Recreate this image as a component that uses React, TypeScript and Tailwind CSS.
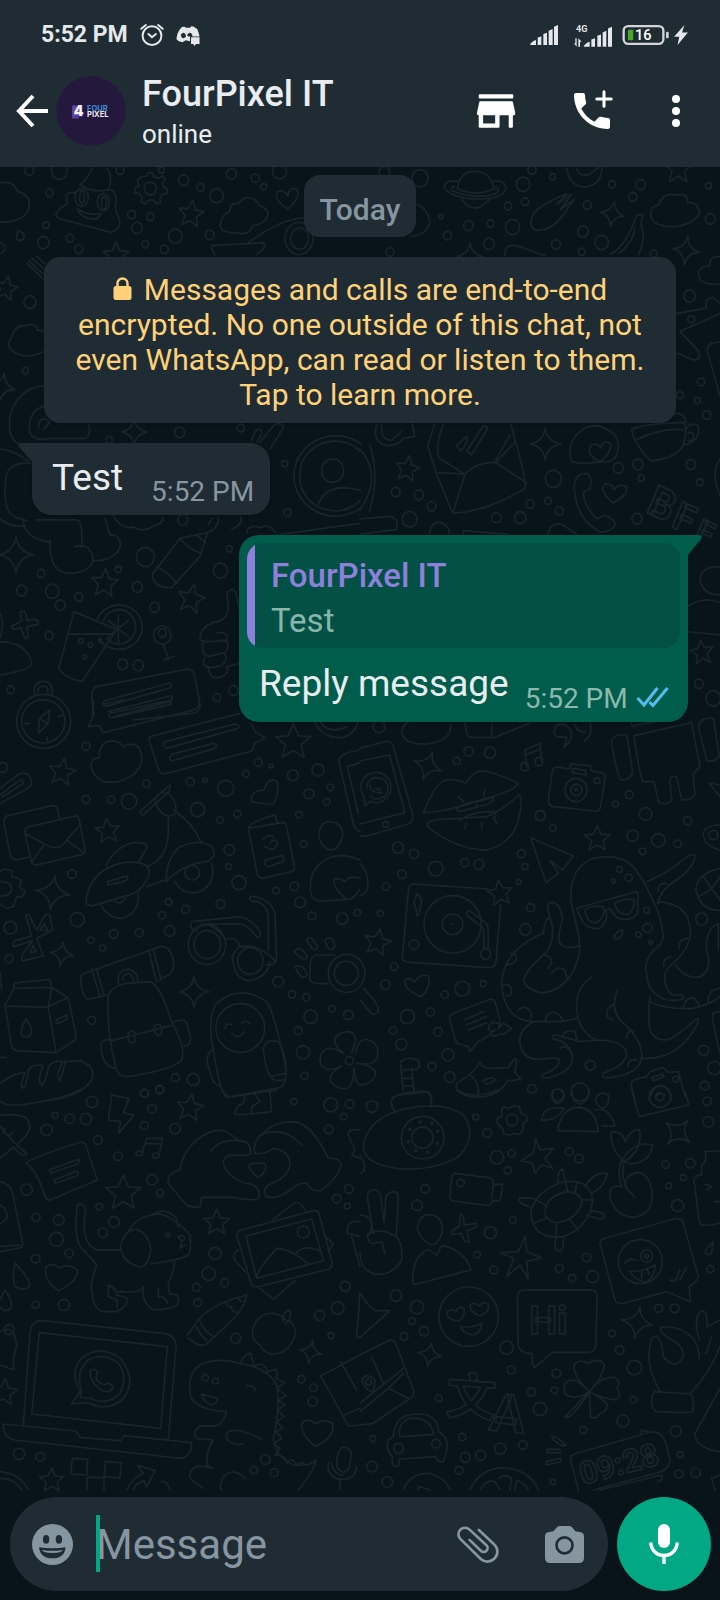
import React from "react";

type Triple = [number, number, number];
type Mark = [number, number, number, number];

interface Tile {
  x: number;
  y: number;
  scaleY: number;
  dots: Triple[];
  stars: Mark[];
  sparkles: Mark[];
  lines: string[];
  words?: { text: string; x: number; y: number; size: number; turn: number }[];
}

const STAR =
  "M0-1 L.28-.36 L.95-.31 L.43.14 L.59.81 L0 .45 L-.59.81 L-.43.14 L-.95-.31 L-.28-.36Z";
const SPARKLE = "M0-1 Q.1-.18 1 0 Q.12.12 0 1 Q-.12.12-1 0 Q-.1-.18 0-1Z";

const TILES: Tile[] = [
  {
    x: 0,
    y: 160,
    scaleY: 0.357,
    dots: [
      [88, 30, 13], [178, 30, 24], [148, 92, 11], [138, 183, 9], [130, 231, 17], [210, 219, 11],
      [360, 28, 12], [484, 28, 9], [551, 57, 15], [602, 77, 11], [694, 39, 15], [766, 51, 12],
      [791, 75, 9], [839, 32, 21], [650, 100, 20], [395, 153, 12], [451, 159, 11], [411, 190, 16],
      [526, 213, 20], [629, 210, 13], [436, 236, 10], [493, 250, 12], [236, 250, 12], [0, 247, 14],
      [90, 398, 18], [76, 590, 9], [539, 763, 15], [722, 751, 11], [327, 784, 10], [854, 851, 9],
      [863, 988, 11], [549, 1008, 15], [436, 1112, 27], [661, 1150, 21], [355, 1147, 9],
      [688, 1089, 9], [123, 1158, 11], [65, 1206, 15], [157, 1208, 20], [181, 1247, 15],
      [236, 1224, 12], [412, 1196, 15], [464, 1253, 14], [147, 1332, 12], [368, 1413, 15],
      [415, 1416, 15], [32, 1484, 11], [651, 1506, 11], [700, 1486, 14], [487, 1331, 26],
      [487, 1325, 12], [300, 1346, 5], [271, 1358, 7], [243, 1347, 7], [254, 1392, 6],
    ],
    stars: [
      [573, 152, 40, 8], [348, 268, 40, 0], [18, 360, 36, 12], [314, 1186, 42, 5], [573, 1230, 42, 12],
    ],
    sparkles: [[403, 762, 38, 0], [48, 1106, 52, 0], [6, 636, 40, 10]],
    lines: [
      "M0 65 Q40 55 52 88 Q95 98 87 135 Q75 173 0 175",
      "M240 70 Q260 55 278 22 M322 24 Q338 48 328 76 M225 92 Q188 85 204 122 Q150 150 178 164 L330 202 Q370 195 356 160 Q340 140 350 110 Q345 82 325 82 Q280 95 243 70 M232 137 Q270 158 303 150 Q298 170 270 164 Q240 160 232 137",
      "M225 105 A20 25 0 1 1 265 105 A20 25 0 1 1 225 105 M292 118 A18 24 0 1 1 328 118 A18 24 0 1 1 292 118 M240 102 a7 12 0 1 1 12 4 a7 12 0 1 1 -12-4 M306 118 a7 12 0 1 1 12 4 a7 12 0 1 1-12-4",
      "M437 46 L445 36 H458 L462 48 L476 51 L488 44 L496 54 L487 66 L492 77 L502 82 L500 94 L487 97 L480 108 L482 118 L468 122 L460 112 L445 113 L436 123 L424 116 L426 103 L416 94 L404 91 L405 78 L417 72 L413 56 L423 47Z M433 80 a18 18 0 1 1 36 0 a18 18 0 1 1-36 0",
      "M689 145 Q690 120 716 121 Q735 95 765 112 Q778 120 778 128 Q808 135 803 158 Q790 182 757 184 Q750 213 710 204 Q660 205 661 181 Q665 150 689 145Z",
      "M864 137 Q815 108 834 88 Q856 84 864 101 Q867 74 888 81 Q908 99 864 137Z",
      "M855 220 a42 45 0 1 1 84 0 a42 45 0 1 1-84 0 M872 220 a27 30 0 1 1 54 0 a27 30 0 1 1-54 0 M740 235 Q840 165 910 162 M635 240 L790 232 Q805 240 770 265 M645 266 L633 245",
      "M50 222 Q50 205 55 198 Q78 205 70 222 Q60 228 50 222Z M82 290 L132 335 M95 275 L132 305 M86 282 L130 320 M110 270 L134 290",
      "M130 537 Q80 560 40 537 Q15 520 35 497 Q45 460 78 464 Q110 455 112 475 L132 482",
      "M132 632 Q50 640 30 720 Q20 790 70 800 M132 690 Q85 700 88 760 Q100 790 150 780 H255 Q275 770 266 740 M115 750 Q120 710 150 735 L130 755",
      "M0 810 Q40 810 92 850 Q35 845 20 880 Q10 930 20 970 Q25 1000 80 1010 M0 1005 Q30 1030 70 1025 M70 1005 Q70 1060 150 1070 M110 1008 H230 Q250 1010 245 1085 M150 1065 Q145 1160 215 1158 Q285 1150 278 1110 Q265 1070 225 1083 M315 1005 L330 1050 Q365 1050 360 1085 Q340 1125 278 1122",
      "M340 995 Q360 1035 400 1028 Q430 1045 460 1025 Q490 1020 490 1000 M620 1045 Q660 1030 655 1000 M625 1020 L635 1005 M695 1035 Q730 1020 722 1000 M740 1045 Q745 1018 780 1030 Q805 1015 828 1045",
      "M457 1160 L540 1060 L622 1044 L600 1110 L515 1198 Q460 1200 457 1160Z M540 1060 Q560 1085 598 1100 M470 1140 Q500 1150 530 1185 M590 1052 L618 1072",
      "M222 1265 L350 1315 L247 1460 Q200 1455 176 1425Z M205 1328 H340 M290 1290 A70 62 0 1 1 300 1345 M310 1290 A50 48 0 1 1 320 1340 M355 1275 V1350 M325 1290 L385 1335 M325 1335 L385 1290",
      "M60 1268 Q80 1255 80 1290 Q115 1280 115 1300 L80 1308 Q90 1345 75 1340 L62 1310 Q35 1320 35 1305 L65 1292Z M490 1357 L506 1398 M492 1400 L525 1390",
      "M0 1350 Q80 1350 95 1410 Q95 1430 0 1442 M0 1270 Q15 1300 0 1338",
      "M755 785 Q765 750 780 755 Q795 760 770 790 M780 790 L825 740 Q850 735 850 750 L810 810",
      "M882 885 a125 112 0 0 1 200-90 M882 885 a125 112 0 0 0 200 90 M900 885 a105 92 0 0 1 180-70 M900 885 a105 92 0 0 0 180 70 M965 870 a33 33 0 1 1 66 0 a33 33 0 1 1-66 0 M955 965 Q980 900 1080 925",
      "M680 1215 Q700 1190 710 1220 L718 1260 M680 1215 Q700 1290 640 1295 Q600 1310 600 1340 Q600 1355 680 1345 Q690 1320 650 1325 M610 1350 Q600 1390 630 1390 L675 1380 Q695 1350 670 1345 M615 1392 Q600 1420 635 1422 Q690 1415 675 1385 M625 1422 Q630 1460 665 1448 Q690 1435 680 1420 L718 1410",
      "M275 1568 L282 1520 Q265 1490 290 1475 L550 1428 Q580 1420 585 1450 L600 1525 Q600 1545 580 1550 L400 1568 M315 1515 L510 1465 Q520 1478 505 1480 L320 1530 Q300 1525 315 1515 M325 1545 L515 1500 Q520 1515 505 1518 L340 1560",
      "M105 1500 Q95 1465 130 1460 Q165 1465 155 1500 M115 1490 a15 12 0 1 1 28 0 M830 1050 L1080 1018",
    ],
  },
  {
    x: 360,
    y: 160,
    scaleY: 0.357,
    dots: [
      [73, 34, 16], [180, 51, 24], [489, 68, 20], [516, 28, 12], [578, 47, 9], [757, 68, 10],
      [842, 69, 14], [819, 103, 12], [682, 126, 12], [444, 129, 11], [495, 117, 11], [325, 184, 14],
      [392, 178, 10], [458, 188, 21], [263, 212, 12], [387, 235, 16], [588, 237, 13], [669, 200, 16],
      [725, 231, 20], [665, 257, 10], [1051, 165, 15], [1046, 72, 9], [881, 262, 10], [989, 381, 17],
      [994, 446, 10], [1023, 622, 11], [960, 659, 10], [1012, 674, 9], [1040, 714, 12], [243, 159, 6],
      [107, 930, 13], [177, 938, 14], [215, 970, 13], [149, 1006, 22], [409, 1002, 14], [481, 1002, 17],
      [510, 964, 12], [564, 955, 10], [598, 983, 12], [580, 893, 24], [775, 862, 15], [834, 853, 15],
      [844, 891, 9], [993, 853, 14], [1019, 903, 10], [831, 1005, 15], [1017, 1467, 13], [1060, 1508, 22],
      [90, 258, 12],
    ],
    stars: [[142, 866, 38, 10], [955, 25, 44, 0], [1026, 1380, 36, -8]],
    sparkles: [[757, 152, 36, 10], [978, 254, 40, 8], [556, 796, 46, 0], [330, 270, 38, 0]],
    lines: [
      "M292 80 Q300 32 345 32 Q390 32 402 80 Q350 105 292 80Z M295 60 Q245 55 255 82 Q300 120 405 105 Q450 90 432 65 Q420 55 396 60 M283 75 Q270 75 275 85 Q340 112 405 95 Q425 85 408 75 M305 110 Q345 160 390 108",
      "M516 160 Q525 130 620 95 L590 125 L635 95 L600 140 L643 110 L605 160 Q570 200 530 197 Q505 190 516 160Z",
      "M620 25 Q630 75 675 76 Q725 70 726 22 M650 25 Q660 48 690 40 L715 20",
      "M875 165 Q865 130 897 125 Q910 90 945 98 Q985 90 982 118 Q1020 120 1018 150 Q1000 180 950 186 Q890 190 875 165Z",
      "M750 265 Q800 240 830 155 L848 153 L843 180 Q860 220 835 265 M780 260 Q820 230 825 190",
      "M150 215 Q215 205 208 165 Q200 135 172 125 M435 268 Q430 235 470 240 L555 268",
      "M1080 270 Q1045 270 1050 295 Q1005 300 1020 335 Q1030 350 1080 348 M948 430 L1040 415 Q1030 390 1060 385 L1080 400 M948 540 L1000 560 Q1025 560 1015 535 L960 480 L1080 430 M1080 510 Q1040 510 1042 535 L1080 660",
      "M50 740 Q35 790 80 800 Q115 800 130 780 L165 775 L155 735 M65 740 Q60 785 95 785 L125 760",
      "M225 737 L203 800 L228 875 L278 990 Q380 985 495 920 Q500 890 452 740 M250 740 Q225 800 237 835 L315 880 L278 990 M228 875 L315 880 Q350 845 407 847 L500 905 M407 847 L465 790 M407 840 L450 770 M290 800 L320 775 Q330 785 302 815Z M320 815 L370 745 Q390 745 375 765 L335 825Z",
      "M635 845 Q620 800 650 770 Q680 740 715 745 Q790 765 772 820 Q765 850 720 845 Q675 825 693 800 Q710 790 722 805 Q735 780 752 795 Q755 820 720 845 Q670 855 635 845Z",
      "M815 755 Q840 740 970 735 Q985 750 970 800 Q940 840 870 842 Q820 790 815 755Z M825 785 Q900 750 970 755 M975 760 Q990 730 1015 745 Q1020 790 975 798 M985 765 a10 12 0 1 1 0 20 M940 712 Q975 705 978 735",
      "M643 920 Q640 880 680 878 Q700 890 690 920 L670 932 Q675 975 710 1005 L735 995 Q770 1010 765 1025 Q745 1045 720 1042 Q650 1010 643 920Z",
      "M758 960 Q715 925 735 908 Q755 905 763 923 Q775 905 800 915 Q805 940 758 960Z",
      "M30 800 Q60 885 28 985 M0 810 Q70 885 0 980 M0 1005 L90 998 Q120 1005 108 1035 L0 1048 M208 1048 Q215 1005 250 1018 Q270 1030 268 1048 M565 1048 Q570 1015 605 1020 L650 1048 M310 1048 V1038 L440 1048",
      "M1080 1140 Q1025 1135 1020 1175 Q1030 1220 1080 1218 M985 1250 Q1030 1220 1080 1240 M985 1322 L1080 1330 M1080 840 Q1050 870 1080 940",
    ],
    words: [
      { text: "B", x: 855, y: 985, size: 120, turn: 24 },
      { text: "F", x: 930, y: 1025, size: 110, turn: 24 },
      { text: "F", x: 1000, y: 1062, size: 90, turn: 24 },
    ],
  },
  {
    x: 0,
    y: 700,
    scaleY: 0.3333,
    dots: [
      [258, 139, 12], [440, 251, 11], [571, 245, 12], [615, 241, 7], [677, 265, 24], [775, 187, 12],
      [738, 222, 10], [879, 226, 16], [954, 210, 18], [991, 262, 10], [927, 282, 15], [980, 305, 10],
      [8, 202, 15], [258, 298, 12], [333, 299, 11], [387, 304, 23], [593, 329, 21], [712, 342, 11],
      [660, 360, 10], [897, 344, 10], [688, 450, 16], [686, 500, 9], [717, 548, 21], [911, 432, 10],
      [828, 572, 10], [883, 559, 13], [900, 607, 16], [216, 522, 13], [232, 659, 21], [31, 683, 19],
      [273, 721, 10], [341, 702, 13], [418, 698, 12], [308, 744, 9], [509, 693, 16], [557, 628, 12],
      [486, 646, 11], [506, 606, 10], [661, 612, 13], [936, 648, 12], [1027, 656, 17], [1072, 638, 10],
      [27, 776, 12], [275, 961, 12], [835, 845, 16], [876, 883, 11], [919, 892, 11], [996, 926, 10],
      [932, 950, 20], [895, 992, 12], [1045, 945, 14], [909, 1057, 20], [914, 1127, 11], [526, 1133, 12],
      [580, 1138, 18], [479, 1168, 12], [433, 1180, 12], [814, 198, 6], [1048, 1082, 12],
    ],
    stars: [[186, 217, 42, 10], [323, 393, 38, -6], [880, 127, 55, 0]],
    sparkles: [[158, 578, 52, 8], [185, 762, 36, 8], [582, 876, 46, 0]],
    lines: [
      "M50 64 a81 81 0 1 1 162 0 a81 81 0 1 1-162 0 M65 64 a65 65 0 1 1 130 0 a65 65 0 1 1-130 0 M118 55 L150 30 L143 72 L115 100Z M118 55 L143 72 M75 70 H88 M175 50 L188 45 M140 110 L142 122",
      "M275 0 L282 45 L265 80 L297 77 L310 98 L580 30 Q602 20 598 0 M310 12 L370 0 M330 40 L505 2 Q520 8 510 14 L335 54 Q320 48 330 40",
      "M298 172 Q295 120 345 123 Q365 130 370 140 Q390 125 415 140 Q440 180 405 220 Q360 255 310 245 Q265 220 275 185 Q282 175 298 172Z",
      "M450 110 L720 40 M450 110 Q445 120 450 130 L475 205 Q480 225 500 220 L755 153 L765 130 L795 113 L765 95 L755 72 M495 125 L705 72 Q720 75 715 85 L500 145 Q485 135 495 125 M515 163 L640 130 Q655 135 645 145 L515 183 Q503 175 515 163",
      "M0 265 L60 220 Q95 215 95 255 L75 270 L0 310 M0 285 L60 240 Q75 240 68 252 L5 292",
      "M92 470 L50 480 Q35 480 30 462 L12 370 Q10 350 25 347 L155 317 Q170 315 173 330 L178 352 M75 400 Q72 385 88 380 L225 348 Q235 345 238 360 L255 450 Q255 463 240 465 L110 495 Q95 495 93 480Z M78 402 Q130 430 150 440 Q185 450 200 420 L240 375 M130 437 L97 483 M200 420 L250 458",
      "M0 517 L8 507 L35 512 L35 530 L55 535 L65 545 L58 560 L75 575 L68 590 L50 590 L45 605 L40 620 L20 625 L0 612 M0 545 Q35 545 35 567 Q30 590 0 588",
      "M77 645 Q88 640 92 655 L110 690 L135 645 Q150 640 150 650 L158 690 L110 715 L130 768 L70 782 Q60 780 70 760 L98 722 L42 740 Q35 730 45 722 L95 708Z M120 690 L133 672 L143 692Z M90 758 L100 738 L110 755Z",
      "M425 330 L510 255 Q515 270 490 290 L430 345 Q415 345 425 330Z M465 300 Q475 270 505 280 Q530 300 528 335 Q515 355 495 345 Q470 330 465 300Z M505 350 V400 Q500 480 440 500 M520 330 Q580 370 602 425 M500 545 Q495 480 540 440 Q600 415 635 440 Q655 470 620 485 Q540 495 500 545Z M525 545 Q550 590 600 575 Q650 550 635 490 M555 518 a22 22 0 1 1 44 0 a22 22 0 1 1-44 0 M318 498 Q345 440 400 428 Q445 425 440 445 L415 487 M258 600 Q270 510 370 488 Q450 480 448 520 Q430 580 370 590 L280 617 Q255 618 258 600Z M322 545 L380 528 Q388 535 378 542 L325 556Z M302 612 Q325 660 370 655 Q420 635 415 580 M340 600 Q360 620 375 595 M440 560 L495 540",
      "M755 305 Q752 280 775 272 Q795 275 797 257 Q810 230 832 245 Q838 280 820 312 Q780 312 755 305Z",
      "M745 385 L850 367 Q858 367 860 378 L883 500 Q885 512 872 515 L790 535 Q775 535 772 522Z M745 385 Q750 365 825 345 L832 368 M790 420 Q800 400 820 410 M795 440 Q830 460 832 425 Q820 415 810 430 M797 480 L845 467 Q858 475 848 485 L805 500 Q790 495 797 480Z",
      "M957 405 Q960 365 990 365 Q1030 370 1028 410 Q1015 450 990 450 Q960 440 957 405Z M935 590 Q920 530 960 490 Q1010 450 1080 480 M935 590 Q945 605 970 603 L1040 598 M1040 598 Q995 560 1003 540 Q1020 530 1035 545 Q1050 525 1080 535 M1040 598 Q1060 600 1078 570",
      "M565 734 a56 60 0 1 1 112 0 a56 60 0 1 1-112 0 M582 734 a40 42 0 1 1 80 0 a40 42 0 1 1-80 0 M697 765 Q700 840 750 842 Q805 830 810 785 M713 783 a38 40 0 1 1 76 0 a38 40 0 1 1-76 0 M675 720 Q710 705 720 740 Q695 760 697 780 M572 670 Q570 690 590 692 M575 665 L720 650 Q760 660 780 695 Q785 712 770 712 Q750 680 725 672 L620 672 M775 605 Q740 605 752 588 Q810 595 825 640 L830 780 Q820 800 800 795 M775 605 Q805 620 805 650 V750 M605 672 Q640 670 675 715 M720 740 Q780 730 828 785",
      "M242 840 Q240 825 255 820 L480 740 Q510 735 520 780 Q525 815 505 825 L470 845 M242 840 Q245 890 265 898 L325 885 M275 807 L300 890 M288 802 L312 885 M447 752 L468 840 M460 748 L482 835 M355 850 Q350 810 385 808 Q415 815 413 845 M368 840 Q370 820 390 822 Q400 830 400 845",
      "M325 890 Q330 860 380 850 L450 845 Q480 855 515 965 Q560 1050 545 1080 Q520 1110 380 1130 Q350 1130 345 1090 Q320 1000 325 890Z M335 1022 L520 975 M385 1000 Q395 985 405 1000 V1022 Q395 1035 385 1022Z M462 980 Q475 965 485 980 V1000 Q475 1012 465 1000Z M335 1020 Q300 1015 303 1040 Q305 1100 348 1105 M525 965 Q560 950 562 980 Q580 1020 565 1035 L550 1038",
      "M42 865 Q38 848 55 848 L150 838 L155 862Z M42 865 L15 915 L35 1040 Q40 1053 60 1053 L168 1058 L225 1020 Q230 1010 225 990 L205 895 L155 862 M15 918 L145 922 L168 1058 M145 920 L200 895 M155 862 L145 920 M78 957 Q60 990 65 1005 Q80 1020 95 1000 Q95 980 78 957Z M168 960 L200 945 Q203 955 198 960 L170 972Z",
      "M0 1150 Q60 1110 75 1120 Q60 1150 68 1165 Q80 1160 85 1110 Q100 1090 130 1098 Q110 1140 125 1158 Q140 1140 145 1100 Q160 1080 188 1085 Q165 1130 178 1143 Q190 1120 195 1085 L240 1082 Q290 1100 275 1140 Q240 1190 150 1200",
      "M640 1050 Q620 950 650 910 Q720 850 800 905 Q820 930 855 1090 Q865 1150 840 1163 L680 1192 Q660 1180 640 1050Z M648 984 a73 73 0 1 1 146 0 a73 73 0 1 1-146 0 M675 985 Q680 965 695 975 M725 970 Q740 955 750 972 M695 1000 Q715 1022 733 995 M790 1045 Q800 1015 835 1025 Q860 1060 858 1120 L810 1130 Q795 1100 790 1045Z M638 1050 Q615 1060 625 1100 L640 1145 L660 1160 M815 1130 Q815 1145 850 1140",
      "M883 755 Q900 730 922 770 Q915 790 883 755Z M920 720 Q930 700 953 740 Q945 765 920 720Z M975 720 Q995 700 1005 740 Q985 765 975 720Z M885 800 Q910 790 922 825 Q905 845 885 800Z M1005 765 H950 Q930 770 930 800 V840 Q935 855 985 850 M985 820 a55 57 0 1 1 110 0 a55 57 0 1 1-110 0 M1003 820 a36 36 0 1 1 72 0 a36 36 0 1 1-72 0",
      "M1030 1060 Q1000 1035 1005 1015 Q1020 995 1045 995 Q1070 1000 1066 1025 L1055 1060 M1030 1060 Q985 1030 965 1060 Q950 1095 980 1108 Q1005 1110 1025 1098 Q985 1120 992 1145 Q1010 1170 1040 1165 Q1060 1160 1062 1105",
      "M1080 150 Q1010 160 1018 190 L1060 370 Q1065 390 1080 395 M1080 188 L1042 200 L1075 340",
      "M940 60 Q970 120 1030 112 Q1065 100 1075 66 M960 66 Q990 105 1040 80 M0 820 L5 870 M0 1072 H20",
    ],
  },
  {
    x: 360,
    y: 700,
    scaleY: 0.3333,
    dots: [
      [57, 80, 18], [326, 154, 14], [390, 158, 17], [290, 183, 11], [766, 312, 9], [808, 284, 12],
      [541, 347, 15], [579, 383, 10], [857, 342, 19], [983, 362, 12], [818, 407, 17], [895, 421, 20],
      [953, 431, 11], [848, 454, 10], [114, 443, 17], [162, 462, 14], [227, 506, 22], [314, 488, 12],
      [357, 493, 15], [126, 523, 13], [484, 461, 12], [495, 500, 9], [476, 546, 7], [78, 560, 11],
      [61, 640, 9], [512, 623, 12], [496, 688, 17], [1025, 657, 18], [103, 800, 11], [76, 854, 14],
      [307, 866, 22], [370, 851, 9], [254, 884, 11], [142, 950, 21], [211, 936, 12], [99, 992, 11],
      [234, 995, 13], [124, 1033, 17], [264, 1065, 18], [216, 1100, 12], [269, 1131, 16], [691, 1096, 15],
      [516, 1166, 13], [660, 1176, 27], [593, 1185, 18], [1031, 1051, 15], [1063, 1104, 20],
      [1034, 1157, 13], [778, 508, 9], [806, 533, 11], [760, 542, 6], [860, 631, 9], [863, 684, 14],
      [835, 704, 8], [872, 727, 6], [162, 734, 14], [711, 242, 9], [77, 373, 9], [1060, 405, 14],
    ],
    stars: [[712, 417, 40, 0], [420, 580, 40, -8], [52, 728, 42, 12]],
    sparkles: [[203, 198, 44, 20]],
    lines: [
      "M125 95 Q130 70 145 68 M125 95 Q130 135 200 132 Q275 125 272 75 M315 70 L320 100 Q325 115 345 112 L400 113 L510 70 M395 75 V112 M612 142 Q640 120 632 90 Q615 65 590 75 Q575 95 590 110 L620 112 Q620 125 612 142 M672 124 Q700 105 690 70 M645 75 Q650 95 675 97",
      "M500 200 L495 150 L540 130 L545 185 M495 165 L542 147 M484 200 a11 9 0 1 1 20 0 a11 9 0 1 1-20 0 M527 185 a11 9 0 1 1 20 0 a11 9 0 1 1-20 0",
      "M0 145 L75 125 Q95 122 100 140 L158 345 Q160 365 145 372 L20 408 L0 408 M0 183 L88 165 L135 338 L0 372 M12 290 A45 45 0 1 1 30 304 L15 318Z M20 265 A32 32 0 1 1 30 288 M30 255 Q25 275 65 280 L60 268 L45 265",
      "M190 338 Q230 240 260 240 Q290 235 318 250 Q340 210 370 213 Q400 215 475 250 Q460 275 360 300 Q270 335 190 338Z M202 380 Q200 360 240 358 L380 350 Q430 330 475 285 Q490 290 480 340 Q465 430 380 450 Q290 450 202 380Z M290 330 Q290 315 345 305 L355 320 L300 335Z M355 305 L400 292 Q400 315 360 318 M300 362 Q330 335 400 335 Q415 345 400 355 M295 290 L310 305 M375 270 L370 290 M315 385 L318 370 M365 385 V368 M410 370 L402 355",
      "M578 210 Q580 200 595 202 L630 207 L632 192 L690 197 L695 213 L725 218 Q738 220 735 235 L722 320 Q720 335 705 333 L580 320 Q565 318 565 300Z M638 205 L678 212 V225 L638 218Z M615 270 a33 35 0 1 1 66 0 a33 35 0 1 1-66 0 M632 270 a17 17 0 1 1 34 0 a17 17 0 1 1-34 0 M645 270 a4 4 0 1 1 8 0 a4 4 0 1 1-8 0",
      "M822 107 L995 68 L1020 200 Q1000 220 1000 225 L1005 280 Q995 305 965 298 L950 232 Q940 225 930 235 L935 300 Q920 320 895 305 L882 245 H850 Q840 235 822 107Z M755 125 Q760 100 800 105 L818 215 Q815 240 785 240 Q770 230 755 125Z M1015 80 Q1020 50 1060 55 L1078 170 Q1060 190 1040 180Z M815 70 V78 L890 65",
      "M1080 255 L1048 250 L1080 290 M1080 375 Q1030 375 1030 405 Q1035 440 1080 450 M1080 505 Q1010 520 1008 570 Q1020 630 1080 632 M1030 530 L1080 600 M1015 590 Q1060 570 1080 530",
      "M512 413 L640 468 L608 510 L570 482 L595 520 L558 548Z M0 490 Q30 520 22 565 Q15 585 0 588",
      "M422 615 L408 785 Q405 805 385 803 L150 787 Q125 785 127 770 L145 575 Q145 552 160 552 L385 567 M192 673 a86 86 0 1 1 172 0 a86 86 0 1 1-172 0 M247 673 a31 31 0 1 1 62 0 a31 31 0 1 1-62 0 M275 673 h5 M172 580 L185 600 L178 640 L172 648 L162 605Z M322 645 Q315 635 328 632 L380 670 Q385 680 385 700 V745 M322 648 L365 680 Q372 685 372 700 V745 M362 762 a15 16 0 1 1 30 0 a15 16 0 1 1-30 0",
      "M185 890 Q130 870 134 840 Q150 830 165 845 Q180 820 205 828 Q215 855 185 890Z M10 865 Q60 915 55 935 Q40 950 30 935 L0 900",
      "M270 965 Q265 945 280 940 L390 898 Q402 897 405 905 L420 960 M270 965 L290 1030 L325 1040 L330 1055 L355 1025 L385 1008 M312 960 L370 935 M318 975 L380 950 M325 990 L380 968 M385 985 Q390 960 410 970 Q425 960 415 985 L430 970 L455 985 L430 1005 L425 1000 Q400 1015 390 1003 L405 990 Q390 1000 385 985",
      "M290 1150 Q330 1130 360 1088 Q370 1105 390 1105 L445 1103 Q465 1070 470 1080 L465 1115 Q475 1135 485 1135 Q460 1145 445 1140 Q410 1200 330 1190 Q280 1175 290 1150Z M333 1128 Q360 1150 355 1188 M365 1145 Q400 1125 405 1140 Q390 1155 375 1150 M-12 1060 Q-10 1020 20 1018 Q60 1030 52 1070 Q45 1100 -10 1090 Q55 1100 45 1130 Q30 1155 0 1155 Q-15 1150 -18 1105 M122 1088 Q120 1080 150 1075 Q185 1078 178 1100 Q170 1115 155 1105 L162 1172 M122 1095 L130 1172 M125 1110 H150 M130 1135 H155 M132 1158 H158 M95 1195 Q120 1175 190 1173 Q215 1180 215 1200",
      "M655 700 L632 600 Q630 500 700 475 Q780 460 820 500 Q860 550 900 650 L910 710 Q905 740 880 750 Q850 790 860 820 Q860 880 920 900 Q980 905 970 885 L935 885 Q910 860 915 820 Q925 800 950 780 Q1000 730 990 680 Q980 610 895 605",
      "M655 700 Q670 770 630 830 Q590 880 540 878 Q480 860 495 830 Q500 810 560 755 Q585 720 575 670 Q555 610 570 608 Q600 600 608 660 Q590 710 600 730 Q620 750 655 738 M570 655 Q555 650 550 700 Q430 750 425 850 Q430 960 520 965 H600 L655 955 M860 545 Q920 520 955 490 Q990 460 1005 465 Q1005 500 950 540 Q900 570 893 610",
      "M693 832 Q640 870 652 940 Q660 1000 710 1020 Q790 1020 800 1060 Q800 1095 730 1120 Q720 1135 750 1133 Q850 1120 845 1060 Q840 1010 780 960 Q750 920 773 870 M520 965 Q470 990 482 1040 Q495 1080 540 1078 Q600 1070 598 1080 Q600 1105 545 1125 Q545 1138 570 1133 Q650 1110 635 1060 Q620 1020 580 1018 Q570 1005 590 1005 L660 1025 L710 1020",
      "M870 890 Q860 980 875 1000 Q890 1025 930 1018 Q980 985 1005 960 Q1020 950 1013 970 Q960 1080 845 1075 M870 905 Q920 930 1000 925 Q1060 910 1080 890 M945 795 Q980 840 1020 830 Q1060 810 1040 750 Q1035 690 1075 670 V750 M650 625 L830 575 Q838 580 833 600 V640 Q815 665 775 655 Q755 640 750 625 L738 630 Q745 665 720 685 Q680 690 665 660Z M675 630 Q690 615 730 620 Q740 645 710 668 Q680 670 675 630Z M765 610 Q790 595 822 598 Q825 630 805 643 Q770 645 765 610Z M760 710 Q780 685 787 690 Q790 710 770 718Z",
      "M450 760 Q475 760 468 780 Q460 795 440 795 M430 855 Q455 850 455 875 Q452 890 438 888 M475 930 Q495 910 515 940 L512 955 M555 965 Q560 935 585 937 Q605 945 608 965 M550 765 Q575 765 575 790 L565 805 M575 820 Q590 795 615 810 L620 835 M760 915 Q735 925 742 950 L758 960 M800 1015 Q800 990 820 995 M805 1100 Q800 1075 830 1080 M605 1010 Q620 985 645 995 L650 1018 M600 1045 Q620 1030 635 1060 M895 575 Q890 550 920 550 M985 715 Q955 715 958 745 M935 770 Q905 775 912 800 M970 920 Q975 895 1000 893 Q1015 905 1018 922 M1045 910 Q1040 870 1080 865",
      "M815 1160 Q810 1140 830 1137 L860 1130 L870 1115 L910 1103 L925 1117 L955 1115 L975 1190 M815 1160 L825 1200 M875 1133 L908 1122 L912 1130 L880 1143Z M938 1137 a9 9 0 1 1 18 0 a9 9 0 1 1-18 0 M868 1200 Q875 1155 910 1158 Q935 1170 935 1200 M885 1195 Q895 1175 915 1185 M1080 935 L1058 940 Q1055 960 1080 1060",
    ],
  },
  {
    x: 0,
    y: 1090,
    scaleY: 0.3333,
    dots: [
      [276, 36, 17], [434, 10, 12], [456, 56, 13], [479, 0, 12], [165, 76, 9], [209, 86, 14],
      [258, 87, 17], [140, 120, 17], [294, 150, 13], [433, 107, 12], [525, 116, 16], [354, 199, 13],
      [882, 35, 9], [992, 45, 21], [1049, 42, 13], [1031, 80, 10], [986, 118, 13], [80, 299, 17],
      [456, 269, 16], [480, 309, 11], [298, 350, 10], [108, 382, 12], [176, 390, 16], [169, 448, 21],
      [342, 396, 16], [309, 428, 14], [207, 490, 13], [107, 506, 13], [107, 644, 11], [192, 645, 17],
      [1046, 297, 13], [1010, 326, 13], [1042, 348, 9], [645, 490, 18], [626, 551, 20], [589, 592, 12],
      [674, 578, 12], [593, 638, 12], [707, 745, 15], [1036, 589, 15], [1013, 654, 19], [959, 676, 15],
      [993, 737, 9], [904, 868, 11], [941, 893, 11], [938, 935, 14], [57, 1092, 17], [121, 1100, 13],
      [796, 1109, 14], [762, 1140, 11], [823, 1148, 12], [616, 863, 10], [646, 873, 9], [503, 436, 6],
      [28, 719, 15], [910, 426, 18],
    ],
    stars: [[570, 54, 42, 8], [370, 310, 55, 0], [650, 398, 40, 0], [12, 908, 42, 6], [155, 1172, 38, 0]],
    sparkles: [[932, 786, 34, 12]],
    lines: [
      "M0 35 Q30 50 60 45 Q180 30 240 0 M335 15 L387 25 L370 68 L402 76 L355 130 L362 95 L325 90Z",
      "M0 75 Q60 70 80 85 Q100 110 75 140 L50 165 L80 190 Q75 200 62 192 L40 172 L0 205 M0 110 L45 160 M10 130 L15 115 M25 140 L40 125",
      "M78 220 Q90 205 240 157 Q252 155 257 165 L292 270 L150 330 Q140 332 135 320 Q110 240 78 220Z M148 240 L235 208 Q242 215 232 222 L152 250Z M162 270 L230 243 Q240 250 230 258 L165 280Z",
      "M440 145 H488 L478 195 M440 145 L428 185 M437 160 L484 162 M408 190 a10 7 0 1 1 20 0 a10 7 0 1 1-20 0 M457 197 a10 7 0 1 1 20 0 a10 7 0 1 1-20 0",
      "M540 240 Q545 190 590 150 Q640 110 680 125 L715 150 Q755 155 752 190 Q740 200 690 195 Q660 205 675 235 Q700 275 755 283 Q785 295 775 325 Q760 335 700 322 H605 L600 350 Q570 355 555 340 L505 280 Q500 250 540 240 M632 183 Q665 140 730 155 M765 190 Q755 155 790 130 Q820 95 880 95 Q935 100 985 205 Q1015 200 1025 225 Q1010 270 960 303 Q935 305 920 280 Q900 275 870 300 Q830 330 800 320 Q785 300 805 285 Q870 260 870 220 Q865 180 820 175 Q790 195 765 190 M780 135 Q850 105 905 165 M775 262 Q745 240 748 225 Q760 215 770 222 Q785 215 798 225 Q798 250 775 262Z",
      "M665 0 Q675 20 700 20 L830 0 M735 20 L730 40 Q705 50 705 72 Q715 78 815 65 L810 5 M765 12 L780 35 L755 50 V70",
      "M1080 120 Q1040 115 1045 135 L1065 180 L1055 195 L1080 205 M1080 395 Q1035 390 1043 430 L1080 440 M1055 440 L1080 530",
      "M0 275 Q30 280 38 310 L68 460 Q70 475 50 475 L0 485 M0 345 Q25 360 20 385 L0 402 M0 470 L60 465",
      "M232 345 Q250 335 257 360 Q240 460 290 480 H362 M232 345 Q220 450 245 475 Q280 510 290 525 Q270 580 275 600 Q280 660 310 665 H350 Q390 645 380 625 Q365 615 350 618 Q355 600 325 585 V620 L350 630 L352 655 M362 470 Q370 420 410 418 Q445 430 452 475 Q450 520 425 532 Q365 520 362 470Z M385 425 Q410 375 480 372 Q520 380 570 435 Q575 480 565 495 Q540 510 450 522 M458 372 Q500 350 530 385 L535 410 M355 605 Q430 610 430 590 V620 Q440 655 465 660 Q535 655 535 635 Q540 610 510 613 Q505 600 505 580 Q525 540 523 510 M475 595 V620 Q500 620 502 640 M535 440 Q550 430 555 445 L545 455Z M545 460 L540 475 L555 465",
      "M175 602 Q130 570 137 532 Q155 515 178 533 Q205 520 232 540 Q235 575 175 602Z M45 520 Q95 570 88 590 Q70 605 45 590 Q35 560 45 520Z M15 600 Q40 635 33 655 Q15 670 0 652 M15 600 L0 630",
      "M710 435 Q710 425 725 420 L940 362 Q952 360 957 370 L997 520 Q995 535 985 538 L775 590 Q760 593 753 580Z M738 438 L935 387 L970 512 L770 565Z M770 565 Q770 540 830 475 Q870 475 925 522 M888 490 Q910 460 965 485 M820 388 L880 340 Q900 330 915 360 M975 440 L1000 462 L985 485 M715 480 Q695 490 705 510 L735 545 M780 595 L820 628 L885 572",
      "M562 735 L600 685 Q640 640 740 615 Q735 660 670 715 L620 762 Q600 770 590 762 L565 745 M600 695 Q610 720 640 740 M590 710 Q600 735 620 752 M678 640 Q685 655 695 650 Q690 665 718 668 M712 625 L725 635",
      "M815 670 Q840 670 860 692 Q880 690 887 730 Q870 790 820 793 Q790 790 780 765 Q755 755 758 720 Q770 670 815 670Z M848 695 Q850 660 870 662 Q875 690 855 702",
      "M0 725 Q45 700 50 770 Q35 810 42 840 L0 825",
      "M70 1005 L90 730 Q92 690 130 692 L490 730 Q530 735 528 775 L505 1048 M95 972 L118 728 L502 770 L482 1015Z M10 1002 L228 1023 L240 1042 L362 1052 L373 1037 L575 1058 Q575 1100 540 1105 L45 1050 Q10 1045 10 1002Z",
      "M240 905 Q205 840 250 800 Q305 765 360 805 Q410 860 375 920 Q330 970 265 938 L215 942Z M245 905 Q225 840 265 810 Q310 785 355 820 Q385 860 360 910 Q320 950 270 925 L240 922Z M270 845 Q285 830 292 848 L288 865 Q295 880 315 885 Q330 875 338 890 Q335 910 310 903 Q270 880 270 845Z",
      "M680 965 Q590 960 572 920 Q560 850 600 825 Q650 800 720 820 Q810 835 832 890 Q840 960 820 1045 Q825 1100 880 1125 Q930 1130 948 1110 Q945 1140 895 1200 M680 965 Q670 1000 650 1008 H600 Q575 1025 590 1045 L640 1050 Q610 1100 625 1130 L640 1135 Q590 1120 575 1140 Q560 1165 590 1180 L610 1195 M605 912 L653 925 Q650 945 630 943 Q610 935 605 912 M740 888 Q760 885 768 902 M785 1048 Q700 1005 680 1030 Q675 1065 730 1063 M735 1165 Q700 1130 670 1160 Q655 1190 665 1200",
      "M722 818 Q735 790 752 790 L762 830 Q790 810 802 845 L828 838 Q835 850 828 865 L855 878 L830 895 L858 917 L835 930 L855 945 L832 960 L852 980 L830 995 L848 1015 L828 1025 L845 1045 L822 1060 L840 1075 L825 1095 Q855 1095 860 1118 Q880 1100 890 1125 Q910 1110 915 1125",
      "M1080 795 L962 858 L1045 1008 L1080 1005 M1022 815 L1070 900 M1035 975 L1080 955 M1080 610 L1070 742 L1080 742",
      "M945 1070 Q900 1030 905 1000 Q925 980 948 1002 Q970 985 998 1000 Q1005 1045 945 1070Z M1010 1130 Q1010 1070 1035 1072 Q1055 1075 1053 1100 L1048 1135 Q1030 1160 1010 1130Z M985 1118 Q980 1165 1025 1168 Q1065 1170 1070 1130 M995 1120 Q1000 1155 1030 1155 M1020 1170 V1200",
      "M217 1105 L263 1108 L260 1155 L213 1152Z M317 1115 L363 1118 L360 1165 L313 1160Z M262 1162 H312 V1200 M262 1162 V1200 M380 1200 Q400 1160 430 1150 L413 1127 L465 1142 L440 1190 L432 1172 Q405 1180 400 1200 M0 1145 Q60 1150 85 1200 M0 1165 Q45 1165 65 1200 M485 1175 Q500 1170 510 1200",
    ],
  },
  {
    x: 360,
    y: 1090,
    scaleY: 0.3333,
    dots: [
      [36, 50, 17], [347, 81, 9], [382, 128, 13], [411, 202, 20], [455, 190, 11], [443, 241, 11],
      [628, 185, 12], [657, 206, 13], [1042, 34, 13], [1045, 96, 16], [917, 224, 11], [991, 220, 14],
      [970, 263, 9], [926, 288, 9], [953, 347, 18], [196, 296, 13], [171, 346, 16], [459, 391, 10],
      [391, 428, 18], [351, 494, 10], [401, 540, 12], [680, 502, 13], [598, 535, 12], [637, 564, 11],
      [698, 560, 18], [1051, 537, 11], [108, 617, 17], [171, 652, 20], [156, 693, 10], [192, 724, 14],
      [132, 739, 12], [440, 773, 20], [896, 655, 12], [944, 655, 13], [756, 730, 10], [779, 780, 13],
      [823, 833, 22], [454, 840, 12], [589, 850, 13], [583, 901, 10], [515, 906, 12], [236, 925, 10],
      [540, 957, 20], [820, 929, 10], [789, 993, 18], [670, 1020, 11], [38, 1046, 9], [307, 1041, 11],
      [489, 1065, 13], [421, 1076, 17], [362, 1096, 15], [316, 1102, 15], [297, 1141, 12], [36, 1130, 16],
      [82, 1176, 16], [947, 1024, 16], [961, 1094, 9], [957, 1152, 12], [1007, 1148, 14], [579, 1176, 8],
      [456, 90, 17], [302, 279, 11], [116, 1075, 15], [228, 1061, 13], [26, 876, 9], [860, 498, 18],
      [860, 498, 6], [145, 155, 3], [150, 118, 3], [180, 96, 3], [215, 100, 3], [233, 124, 3],
      [232, 161, 3], [203, 187, 3], [168, 182, 3],
    ],
    stars: [],
    sparkles: [[953, 127, 46, 40], [832, 698, 48, 10], [209, 794, 36, 10]],
    lines: [
      "M10 170 Q20 90 120 60 Q250 30 310 75 Q355 140 295 200 Q220 245 110 235 Q10 220 10 170Z M124 143 a64 64 0 1 1 128 0 a64 64 0 1 1-128 0 M155 143 a32 32 0 1 1 64 0 a32 32 0 1 1-64 0 M95 50 Q88 20 120 15 L205 5 Q215 10 215 50 M95 45 L105 70 M0 195 Q20 225 10 245 L0 250 M290 0 Q340 30 415 0 M355 0 V20",
      "M430 50 L445 55 L460 48 L478 50 L482 68 L500 78 L502 90 L488 100 L490 118 L480 133 L462 130 L450 135 L432 132 L428 115 L412 100 L412 85 L425 78 L425 62Z",
      "M527 145 L540 180 L580 175 L555 205 L578 235 L545 225 L525 250 L518 220 L483 212 L520 190Z M495 440 L500 485 L545 503 L500 515 L505 568 L480 525 L440 560 L462 505 L422 488 L475 485Z",
      "M595 110 Q610 50 660 52 Q710 60 715 125 L595 122Z M635 0 Q640 40 660 42 Q685 35 688 0 M580 0 Q570 30 593 42 Q620 30 608 0 M707 25 Q720 0 745 15 Q750 45 728 55 Q708 50 707 25Z M545 90 Q550 45 612 55 Q590 95 545 90Z M705 60 Q750 50 765 108 L725 108",
      "M815 0 L838 80 L985 45 Q985 30 972 0 M868 20 a32 32 0 1 1 64 0 a32 32 0 1 1-64 0 M887 20 a12 12 0 1 1 24 0 a12 12 0 1 1-24 0",
      "M785 210 Q745 160 755 125 Q790 125 795 155 Q810 120 838 118 Q850 175 800 210 M785 210 Q825 150 878 165 Q870 220 810 222 Q795 215 785 210 Q770 250 785 290 Q745 280 750 325 Q770 380 820 382 Q880 375 877 310 Q870 250 830 247 Q785 260 800 295 L825 322 M795 210 Q780 250 800 295",
      "M285 250 L385 263 Q402 265 400 283 L428 283 L420 332 H398 L388 347 L280 333 Q268 330 270 315 L275 262 Q278 250 285 250Z M400 285 L395 325",
      "M512 370 Q520 310 600 278 Q690 260 698 330 Q690 410 610 440 Q520 450 512 370Z M555 370 Q555 320 620 305 Q670 310 665 345 Q640 395 590 398 Q560 395 555 370Z M595 280 Q590 240 608 238 L622 300 M675 290 Q700 245 742 250 Q735 290 695 310 M515 325 L480 323 Q470 340 510 350 M690 360 L730 370 Q740 385 720 388 L680 375 M590 400 L585 475 Q600 490 608 475 L612 440 M520 325 L555 345 M650 280 L645 310 M665 330 H698 M630 390 L655 420 M520 400 L558 385",
      "M40 430 L22 320 Q25 295 45 300 Q62 300 65 340 L72 398 L78 320 Q90 300 112 308 Q118 320 108 440 Q130 460 125 510 Q100 555 50 553 Q0 545 0 490 M22 435 Q60 410 108 440 M22 435 Q25 465 45 460 Q70 450 68 465 L75 490 M0 375 Q35 375 35 410 L30 430",
      "M172 415 Q178 372 210 374 Q250 380 247 425 Q235 465 215 465 Q180 450 172 415Z M158 580 Q155 500 205 478 L230 495 L245 467 Q315 480 332 540 L168 583Z M300 373 Q312 370 312 405 L350 400 Q355 415 320 422 L328 455 Q310 460 305 430 L275 433 Q270 420 298 410Z",
      "M720 460 Q720 448 735 445 L950 385 Q965 385 970 398 L1015 560 Q1015 570 988 590 L992 635 L920 605 L790 640 Q770 643 765 630Z M775 515 a66 66 0 1 1 132 0 a66 66 0 1 1-132 0 M795 520 Q810 500 828 512 M810 545 Q850 545 885 525 Q885 565 855 577 Q825 570 810 545Z M845 540 V565 M862 538 L868 555 M930 570 Q945 575 950 565 L960 540 M960 570 L978 535",
      "M237 680 a89 89 0 1 1 178 0 a89 89 0 1 1-178 0 M298 693 Q255 690 262 665 Q275 655 287 665 Q295 645 312 655 Q315 680 298 693Z M360 678 Q325 665 332 643 Q345 635 358 648 Q370 632 385 643 Q390 665 360 678Z M302 710 Q335 715 365 700 Q365 730 338 735 Q310 733 302 710Z",
      "M472 620 Q472 600 495 600 H690 Q712 600 712 620 L707 765 Q705 787 685 787 H577 L525 832 Q515 832 517 790 H500 Q478 785 475 765Z",
      "M688 905 Q640 860 642 825 Q655 805 685 820 Q720 800 733 825 Q730 860 688 905 Q640 935 615 910 Q605 870 640 870 Q660 875 688 905 Q720 860 765 862 Q785 880 770 895 Q790 920 765 930 Q725 925 688 905 Q640 955 615 980 Q625 985 640 970 L688 910 L692 980 Q710 990 720 970 Q745 965 740 940 Q720 920 688 905",
      "M900 905 Q860 830 868 790 Q870 740 885 738 Q905 740 910 800 Q940 835 960 815 Q985 785 945 755 Q895 730 903 712 Q960 705 1000 745 Q1020 780 1018 805 M1018 750 Q1000 690 1020 665 Q1045 655 1040 710 L1080 690 M1055 740 L1038 790 M1080 770 Q1050 850 990 912 M885 905 L990 912 Q1005 920 998 965 Q990 970 890 965 Q870 955 878 915 Q880 905 885 905",
      "M1080 895 L1005 1030 Q1005 1075 1080 1085 M1080 183 L1035 185 Q1045 210 1025 225 V255 Q1005 255 1002 270 L1018 395 Q1020 410 1050 405 L1080 400 M1035 283 L1055 290 L1040 300 M1062 335 H1080 M1060 455 Q1035 480 1035 485 Q1040 500 1055 490Z",
      "M0 795 L90 750 Q102 748 108 762 L162 905 Q162 920 150 925 L40 1000 L0 1005 M0 940 L130 835 M0 965 L85 895 L145 925 M85 895 L130 850 M35 800 L70 880 M5 870 Q20 845 45 870 Q45 890 38 905 Q15 900 5 870Z M0 610 Q30 655 45 662 H90 L0 742",
      "M120 1040 Q110 1000 150 985 Q210 980 222 1033Z M100 1040 Q105 980 150 975 Q230 960 235 1025 Q265 1040 262 1075 L250 1115 Q235 1120 228 1100 L118 1107 Q120 1130 108 1130 Q95 1130 97 1100 Q75 1080 85 1050 L100 1040",
      "M575 1040 Q585 1035 618 1065 Q610 1075 580 1050Z M560 1078 H600 V1088 H560Z M558 1115 L603 1105 V1115 L560 1125Z M632 1110 Q630 1095 650 1090 L870 1027 Q905 1020 918 1060 L930 1110 Q930 1130 905 1145 L700 1200 M632 1110 L655 1200 M840 1030 L845 1020 L865 1025 M720 1200 L905 1155 Q910 1170 895 1175",
      "M130 1200 Q150 1150 200 1150 Q250 1155 270 1200 M330 1200 Q360 1135 430 1133 Q510 1140 535 1200 M360 1200 Q380 1165 405 1175 L420 1200 M415 1165 Q435 1150 455 1165 L450 1200 M465 1200 L470 1170 Q495 1180 505 1200 M175 1200 V1188 L210 1200 M1080 1155 L1055 1165 L1065 1200",
    ],
    words: [
      { text: "Hi", x: 508, y: 732, size: 118, turn: 0 },
      { text: "文", x: 255, y: 970, size: 150, turn: 4 },
      { text: "A", x: 385, y: 1020, size: 160, turn: 6 },
      { text: "09:28", x: 668, y: 1185, size: 94, turn: -15 },
    ],
  },
];

function Wallpaper() {
  return (
    <svg
      className="pointer-events-none absolute inset-0 h-full w-full"
      viewBox="0 0 720 1600"
      preserveAspectRatio="xMidYMin slice"
      fill="none"
      stroke="#18242a"
      strokeWidth="5"
      strokeLinecap="round"
      strokeLinejoin="round"
      aria-hidden="true"
    >
      {TILES.map((t) => (
        <g key={`${t.x}-${t.y}`} transform={`translate(${t.x} ${t.y}) scale(0.3333 ${t.scaleY})`}>
          {t.dots.map(([x, y, r]) => (
            <circle key={`d${x}-${y}-${r}`} cx={x} cy={y} r={r} />
          ))}
          {t.stars.map(([x, y, r, a]) => (
            <path
              key={`s${x}-${y}`}
              d={STAR}
              transform={`translate(${x} ${y}) rotate(${a}) scale(${r})`}
              strokeWidth={5 / r}
            />
          ))}
          {t.sparkles.map(([x, y, r, a]) => (
            <path
              key={`k${x}-${y}`}
              d={SPARKLE}
              transform={`translate(${x} ${y}) rotate(${a}) scale(${r})`}
              strokeWidth={5 / r}
            />
          ))}
          <path d={t.lines.join(" ")} />
          {t.words?.map((w) => (
            <text
              key={`${w.text}${w.x}`}
              transform={`translate(${w.x} ${w.y}) rotate(${w.turn})`}
              fontSize={w.size}
              className="font-['Roboto','Noto_Sans_CJK_SC',sans-serif] font-bold"
            >
              {w.text}
            </text>
          ))}
        </g>
      ))}
    </svg>
  );
}

function SignalIcon() {
  return (
    <svg viewBox="512 74 84 60" className="h-5 w-7" fill="#e4e8ea" aria-hidden="true">
      <path d="M512 134 Q516 123 530 119 V134Z M535 134 V112 L546 108 V134Z M552 134 V101 L563 97 V134Z M568 134 V91 L580 86 V134Z M584 134 V79 L596 74 V134Z" />
    </svg>
  );
}

function StatusBar() {
  return (
    <div className="flex h-[70px] items-center justify-between pl-[41px] pr-8 text-[#e4e8ea]">
      <div className="flex items-center">
        <span className="text-[23px] font-bold">5:52 PM</span>
        <svg viewBox="415 70 74 72" className="ml-3 h-6 w-6" fill="none" stroke="#e4e8ea" strokeWidth="6" strokeLinecap="round" aria-hidden="true">
          <circle cx="452" cy="108" r="29" />
          <path d="M441 103 L452 113 L464 103 M419 87 L433 75 M471 75 L485 87" />
        </svg>
        <svg viewBox="524 74 70 62" className="ml-3 h-[21px] w-6" aria-hidden="true">
          <path
            fill="#e4e8ea"
            fillRule="evenodd"
            d="M541 80 Q550 77 553 82 H565 Q568 76 576 79 L586 86 Q591 96 593 108 H565 V122 L552 119 L543 125 Q530 123 525 116 Q526 95 541 80Z M542 98 A7 8 0 1 0 549 112 A7 8 0 0 0 542 98 M562 97 L556 104 L560 108 H572 Q573 98 562 97"
          />
          <path fill="#e4e8ea" d="M568 110 H593 V130 H583 L577 136 L575 130 H568Z" />
        </svg>
      </div>
      <div className="flex items-center">
        <SignalIcon />
        <svg viewBox="645 66 114 68" className="ml-4 h-[23px] w-[38px]" fill="#e4e8ea" aria-label="4G">
          <text x="651" y="90" fontSize="27" className="font-['Roboto'] font-bold">4G</text>
          <path d="M674 134 Q678 123 692 119 V134Z M697 134 V112 L708 108 V134Z M715 134 V101 L726 97 V134Z M731 134 V91 L742 86 V134Z M747 134 V79 L759 74 V134Z" />
          <path d="M645 124 H649 V108 H653 V134Z M658 134 V108 L668 119 H663 V134Z" />
        </svg>
        <svg viewBox="788 72 142 66" className="ml-[10px] h-[22px] w-[47px]" fill="none" aria-label="Battery 16%">
          <rect x="793" y="78" width="120" height="54" rx="14" stroke="#d3d5da" strokeWidth="7" />
          <rect x="921" y="95" width="8" height="20" rx="3" fill="#d3d5da" />
          <rect x="806" y="89" width="16" height="32" rx="3" fill="#4aa924" />
          <text x="827" y="121" fontSize="44" fill="#ffffff" className="font-['Roboto'] font-medium">16</text>
        </svg>
        <svg viewBox="945 76 40 58" className="ml-[5px] h-5 w-[14px]" fill="#e4e8ea" aria-hidden="true">
          <path d="M975 76 L945 110 H960 L955 134 L985 98 H968Z" />
        </svg>
      </div>
    </div>
  );
}

function Header() {
  return (
    <header className="relative z-10 bg-[#1f2c34]">
      <StatusBar />
      <div className="flex h-[97px] items-start pl-4 pr-10">
        <div className="flex h-[82px] flex-1 items-center">
          <button type="button" aria-label="Back" className="shrink-0">
            <svg viewBox="0 0 34 34" className="h-[34px] w-[34px]" fill="none" stroke="#ffffff" strokeWidth="4" aria-hidden="true">
              <path d="M17 2 L3 17 L17 32 M3 17 H32" />
            </svg>
          </button>
          <svg viewBox="168 226 210 212" className="ml-[6px] h-[70px] w-[70px] shrink-0" role="img" aria-label="FourPixel IT avatar">
            <circle cx="273" cy="332" r="105" fill="#24183d" />
            <rect x="216" y="315" width="20" height="40" rx="2" fill="#6247aa" />
            <path d="M216 355 L236 340 H254 L246 350 H232Z" fill="#4b3590" />
            <text x="221" y="347" fontSize="42" fill="#f5f3fb" className="font-['Inter'] font-black">4</text>
            <text x="261" y="331" fontSize="23" fill="#348fd0" className="font-['Inter'] font-bold">FOUR</text>
            <text x="261" y="350" fontSize="23" fill="#eeeaf6" className="font-['Inter'] font-bold">PIXEL</text>
          </svg>
          <div className="ml-4 min-w-0 flex-1 pt-[3px]">
            <h1 className="text-[36px] font-medium leading-[42px] text-[#e9edef]">FourPixel IT</h1>
            <p className="text-[26px] leading-[38px] text-[#e9edef]">online</p>
          </div>
          <button type="button" aria-label="Catalog">
            <svg viewBox="0 0 24 24" className="h-[50px] w-[50px]" fill="#ffffff" aria-hidden="true">
              <path d="M4.2 4h15.6q.5 0 .5.5v1q0 .5-.5.5H4.2q-.5 0-.5-.5v-1q0-.5.5-.5Z M4.4 7.3h15.2q.4 0 .5.4l1.1 5v.9q0 .4-.4.4h-.7v5.5q0 .5-.5.5h-1.1q-.4 0-.4-.5V14h-4.4v5.5q0 .5-.5.5H4.2q-.5 0-.5-.5V14h-.3q-.5 0-.5-.4v-.9l1.1-5q0-.4.4-.4Z M5.8 14v4h5.8v-4Z" fillRule="evenodd" />
            </svg>
          </button>
          <button type="button" aria-label="Call" className="ml-[47px]">
            <svg viewBox="0 0 24 24" className="h-12 w-12" fill="#ffffff" aria-hidden="true">
              <path d="M20 15.5c-1.25 0-2.45-.2-3.57-.57-.35-.11-.74-.03-1.02.24l-2.2 2.2c-2.83-1.44-5.15-3.75-6.59-6.59l2.2-2.21c.28-.26.36-.65.25-1C8.7 6.45 8.5 5.25 8.5 4c0-.55-.45-1-1-1H4c-.55 0-1 .45-1 1 0 9.39 7.61 17 17 17 .55 0 1-.45 1-1v-3.5c0-.55-.45-1-1-1Z" />
              <path d="M18 2.4V9.600M14.400 6H21.600" stroke="#ffffff" strokeWidth="1.5" strokeLinecap="round" />
            </svg>
          </button>
          <button type="button" aria-label="More options" className="ml-14">
            <svg viewBox="0 0 8 34" className="h-[34px] w-2" fill="#ffffff" aria-hidden="true">
              <circle cx="4" cy="5" r="4" />
              <circle cx="4" cy="17" r="4" />
              <circle cx="4" cy="29" r="4" />
            </svg>
          </button>
        </div>
      </div>
    </header>
  );
}

function Conversation() {
  return (
    <main className="relative flex flex-1 flex-col items-start gap-5 pt-2">
      <div className="flex h-[62px] items-center self-center rounded-2xl bg-[#202c33] px-4 pt-[6px] text-[30px] font-medium text-[#8596a0]">
        Today
      </div>

      <button
        type="button"
        className="mx-11 self-stretch rounded-2xl bg-[#202c33] px-6 pb-[11px] pt-[15px] text-center text-[30px] leading-[35px] text-[#ffd279] shadow"
      >
        <svg viewBox="0 0 18 23" className="mr-3 inline-block h-[23px] w-[19px] align-baseline" aria-hidden="true">
          <path d="M4 11V6.500a5 5 0 0 1 10 0V11" fill="none" stroke="#ffd279" strokeWidth="2.4" />
          <rect y="9" width="18" height="14" rx="2.500" fill="#ffd279" />
        </svg>
        Messages and calls are end-to-end encrypted. No one outside of this chat, not even WhatsApp, can
        read or listen to them. Tap to learn more.
      </button>

      <article className="relative ml-8 flex h-[72px] rounded-[20px] rounded-tl-none bg-[#202c33] pl-5 pr-4 shadow">
        <svg viewBox="0 0 15 20" className="absolute -left-[14px] top-0 h-5 w-[15px]" fill="#202c33" aria-hidden="true">
          <path d="M3 0H15V20L1 4Q-1 0 3 0Z" />
        </svg>
        <p className="pt-[14px] text-[37px] leading-[42px] text-[#e9edef]">Test</p>
        <time className="ml-7 self-end pb-[5px] text-[28px] leading-9 text-[#8596a0]">5:52 PM</time>
      </article>

      <article className="relative mr-8 flex w-[449px] flex-col self-end rounded-[20px] rounded-tr-none bg-[#005d4b] px-2 pt-2 shadow">
        <svg viewBox="0 0 15 21" className="absolute -right-[14px] top-0 h-[21px] w-[15px]" fill="#005d4b" aria-hidden="true">
          <path d="M0 0H12Q16 0 14 4L1 20H0Z" />
        </svg>
        <blockquote className="flex h-[105px] overflow-hidden rounded-2xl bg-[#025144]">
          <span className="w-2 bg-[#8f7fdc]" />
          <div className="pl-4 pt-[10px]">
            <p className="text-[33px] font-medium leading-[45px] text-[#8f7fdc]">FourPixel IT</p>
            <p className="text-[33px] leading-[45px] text-[#89b5aa]">Test</p>
          </div>
        </blockquote>
        <div className="flex h-[74px] items-start pl-3">
          <p className="pt-[15px] text-[37px] leading-[42px] text-[#e9edef]">Reply message</p>
          <time className="ml-4 self-end pb-[5px] text-[28px] leading-9 text-[#8cb7ad]">5:52 PM</time>
          <svg viewBox="0 0 34 22" className="ml-2 mt-[38px] h-[22px] w-[34px]" fill="none" stroke="#53bdeb" strokeWidth="3" role="img" aria-label="Read">
            <path d="M1.500 12 L8 19 L21.500 2 M13.500 16 L17 19.500 L31.500 2" />
          </svg>
        </div>
      </article>
    </main>
  );
}

function Composer() {
  return (
    <footer className="relative flex items-center gap-[9px] pb-[9px] pl-[10px] pr-[9px]">
      <div className="flex h-[94px] min-w-0 flex-1 items-center rounded-full bg-[#1f2c34] pl-[22px] pr-6">
        <button type="button" aria-label="Emoji" className="shrink-0">
          <svg viewBox="96 131 122 122" className="h-[41px] w-[41px]" aria-hidden="true">
            <circle cx="157" cy="192" r="61" fill="#8696a0" />
            <ellipse cx="138" cy="177" rx="9.500" ry="13" fill="#1f2c34" />
            <ellipse cx="176" cy="177" rx="9.500" ry="13" fill="#1f2c34" />
            <path d="M117 200 Q157 206 196 200 Q193 233 157 233 Q120 233 117 200Z" fill="#1f2c34" />
            <path d="M125 208 Q157 213 188 208 Q184 217 157 217 Q130 217 125 208Z" fill="#8696a0" />
          </svg>
        </button>
        <div className="relative ml-[23px] min-w-0 flex-1">
          <input
            type="text"
            aria-label="Message"
            placeholder="Message"
            className="block h-[58px] w-full bg-transparent text-[42px] text-[#e9edef] caret-[#02a884] outline-none placeholder:text-[#8696a0] placeholder:opacity-100"
          />
          <span className="absolute left-0 top-0 h-[57px] w-1 bg-[#02a884]" />
        </div>
        <button type="button" aria-label="Attach" className="shrink-0">
          <svg viewBox="285 133 130 118" className="h-[39px] w-[43px]" fill="none" stroke="#8696a0" strokeWidth="8" strokeLinecap="round" aria-hidden="true">
            <path d="M354 148 L400 191 A28 28 0 0 1 360 236 L298 175 A19 19 0 0 1 326 147 L377 194 A11 11 0 0 1 360 211 L326 178" />
          </svg>
        </button>
        <button type="button" aria-label="Camera" className="ml-[46px] shrink-0">
          <svg viewBox="555 132 117 111" className="h-[37px] w-[39px]" aria-hidden="true">
            <path
              fill="#8696a0"
              d="M555 164 Q555 151 568 150 L580 148 L591 136 Q595 132 600 132 H627 Q632 132 636 136 L646 148 L659 150 Q672 151 672 164 V228 Q672 243 657 243 H570 Q555 243 555 228Z"
            />
            <circle cx="613.500" cy="190" r="24" fill="#8696a0" stroke="#1f2c34" strokeWidth="8" />
          </svg>
        </button>
      </div>
      <button
        type="button"
        aria-label="Record voice message"
        className="flex h-[94px] w-[94px] shrink-0 items-center justify-center rounded-full bg-[#02a884]"
      >
        <svg viewBox="0 0 30 40" className="h-10 w-[30px]" aria-hidden="true">
          <rect x="9" y="0" width="12" height="24" rx="6" fill="#ffffff" />
          <path d="M1.800 18.500 A13.200 13 0 0 0 28.200 18.500 M15 31 V40" fill="none" stroke="#ffffff" strokeWidth="3.400" />
        </svg>
      </button>
    </footer>
  );
}

export default function App() {
  return (
    <div className="relative flex min-h-screen flex-col overflow-hidden bg-[#08141a] font-['Roboto',sans-serif]">
      <Wallpaper />
      <Header />
      <Conversation />
      <Composer />
    </div>
  );
}
